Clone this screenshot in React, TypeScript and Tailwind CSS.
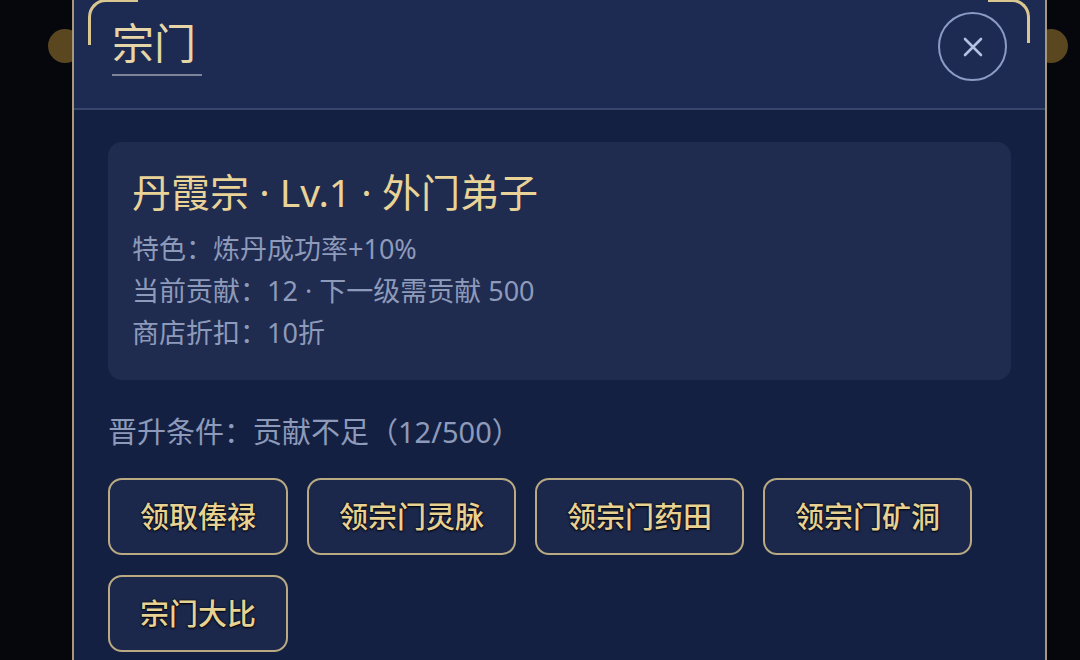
import React from 'react';

const buttons = ['领取俸禄', '领宗门灵脉', '领宗门药田', '领宗门矿洞', '宗门大比'];

const infoLines = ['特色：炼丹成功率+10%', '当前贡献：12 · 下一级需贡献 500', '商店折扣：10折'];

export default function App() {
  return (
    <div className="relative h-[660px] w-[1080px] overflow-hidden bg-[#05070d] font-['Noto_Sans','Noto_Sans_CJK_SC',sans-serif]">
      {/* page behind the overlay */}
      <div className="flex justify-between pl-[48px] pr-[12px] pt-[29px]">
        <div className="h-[34px] w-[34px] rounded-full bg-[#5a4720]" />
        <div className="h-[34px] w-[34px] rounded-full bg-[#5a4720]" />
      </div>

      {/* modal */}
      <div className="absolute left-[72px] top-[-2px] h-[700px] w-[975px] border-2 border-[#a7987a] bg-[#142042]">
        {/* corner ornaments */}
        <div className="absolute left-[14px] top-[-1px] h-[46px] w-[50px] rounded-tl-[18px] border-l-[3px] border-t-[3px] border-[#dac790]" />
        <div className="absolute right-[15px] top-[-1px] h-[44px] w-[42px] rounded-tr-[18px] border-r-[3px] border-t-[3px] border-[#dac790]" />

        {/* header */}
        <div className="flex h-[110px] items-start justify-between border-b-2 border-[#39466c] bg-[#1d2a51] pl-[38px] pr-[38px]">
          <div className="pt-[22px]">
            <div className="border-b-2 border-[#7d8398] pb-[10px] pr-[6px] text-[42px] leading-[42px] text-[#e6d5a6]">
              宗门
            </div>
          </div>
          <button className="mt-[12px] flex h-[69px] w-[69px] items-center justify-center rounded-full border-2 border-[#8a9cc5]">
            <svg width="22" height="22" viewBox="0 0 22 22" fill="none" stroke="#b2c1e2" strokeWidth="2.6" strokeLinecap="round">
              <path d="M3 3L19 19M19 3L3 19" />
            </svg>
          </button>
        </div>

        {/* body */}
        <div className="px-[34px] pt-[32px]">
          <div className="rounded-[14px] bg-[#1f2b4f] px-[24px] pb-[26px] pt-[26px]">
            <div className="text-[39px] leading-[48px] text-[#e9d397]">丹霞宗 · Lv.1 · 外门弟子</div>
            <div className="mt-[12px]">
              {infoLines.map((line) => (
                <div key={line} className="text-[27px] leading-[42px] text-[#8d9aba]">
                  {line}
                </div>
              ))}
            </div>
          </div>

          <div className="mt-[32px] text-[29px] leading-[40px] text-[#8d9aba]">晋升条件：贡献不足（12/500）</div>

          <div className="mt-[26px] flex flex-wrap gap-x-[19px] gap-y-[20px]">
            {buttons.map((label) => (
              <button
                key={label}
                className="h-[77px] rounded-[14px] border-2 border-[#b9aa82] bg-[#1b274b] px-[30px] text-[29px] font-medium text-[#e8d293] [text-shadow:0_0_2px_rgba(0,0,0,0.95),0_1px_2px_rgba(0,0,0,0.9)]"
              >
                {label}
              </button>
            ))}
          </div>
        </div>
      </div>
    </div>
  );
}
